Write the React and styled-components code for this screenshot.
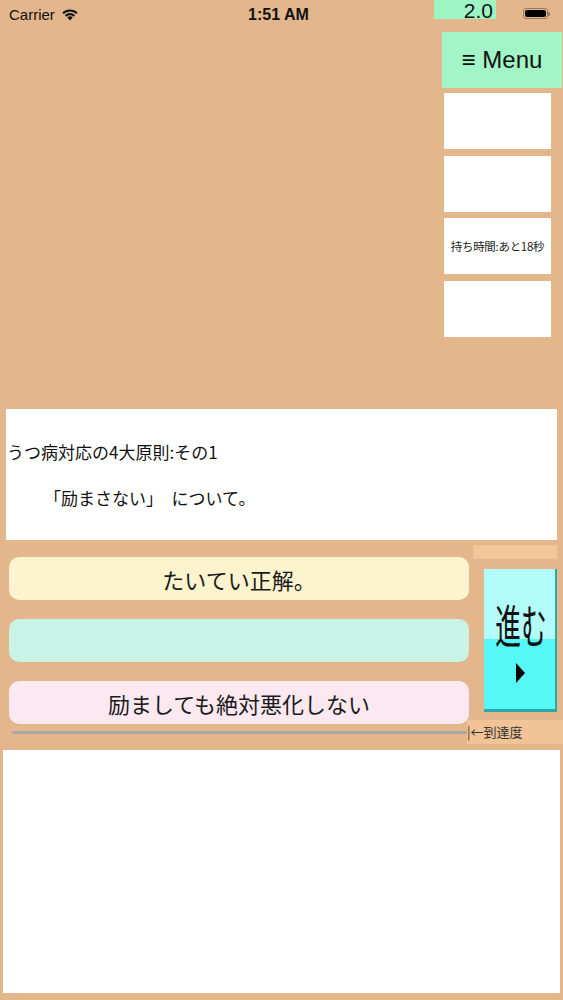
import React from "react";
import styled, { createGlobalStyle } from "styled-components";

const GlobalStyle = createGlobalStyle`
  html, body {
    margin: 0;
    padding: 0;
    background: #e3b68b;
  }
  body {
    font-family: "Liberation Sans", "Noto Sans CJK JP", sans-serif;
    color: #111;
  }
`;

const JP = `"Noto Sans CJK JP", "Liberation Sans", sans-serif`;

const App = () => {
  return (
    <>
      <GlobalStyle />
      <Page>
        <StatusBar>
          <Carrier>
            Carrier
            <svg width="18" height="13" viewBox="0 0 18 13">
              <path d="M9 12.5 L6.3 9.6 A3.9 3.9 0 0 1 11.7 9.6 Z" fill="#111" />
              <path d="M3.9 7.2 A7.2 7.2 0 0 1 14.1 7.2 L12.6 8.7 A5.1 5.1 0 0 0 5.4 8.7 Z" fill="#111" />
              <path d="M1.3 4.6 A10.9 10.9 0 0 1 16.7 4.6 L15.2 6.1 A8.8 8.8 0 0 0 2.8 6.1 Z" fill="#111" />
            </svg>
          </Carrier>
          <Clock>1:51 AM</Clock>
          <StatusRight>
            <Version>2.0</Version>
            <Battery>
              <span />
            </Battery>
          </StatusRight>
        </StatusBar>

        <TopArea>
          <SideColumn>
            <MenuButton>≡ Menu</MenuButton>
            <InfoBox />
            <InfoBox />
            <InfoBox>持ち時間:あと18秒</InfoBox>
            <InfoBox />
          </SideColumn>
        </TopArea>

        <QuestionPanel>
          <QuestionTitle>うつ病対応の4大原則:その1</QuestionTitle>
          <QuestionBody>「励まさない」　について。</QuestionBody>
        </QuestionPanel>

        <MidArea>
          <AnswerColumn>
            <Answer $bg="#fbf4cf">たいてい正解。</Answer>
            <Answer $bg="#c9f3e7"></Answer>
            <Answer $bg="#fce8f0">励ましても絶対悪化しない</Answer>
          </AnswerColumn>
          <NextColumn>
            <TopStrip />
            <NextButton>
              <NextLabel>進む</NextLabel>
              <Arrow />
            </NextButton>
          </NextColumn>
        </MidArea>

        <ProgressRow>
          <Track />
          <ProgressLabel>|←到達度</ProgressLabel>
        </ProgressRow>

        <BottomPanel />
      </Page>
    </>
  );
};

export default App;

const Page = styled.div`
  width: 563px;
  height: 1000px;
  display: flex;
  flex-direction: column;
  overflow: hidden;
`;

const StatusBar = styled.div`
  height: 28px;
  flex-shrink: 0;
  display: grid;
  grid-template-columns: 1fr auto 1fr;
  align-items: start;
`;

const Carrier = styled.div`
  display: flex;
  align-items: center;
  gap: 6px;
  padding: 6px 0 0 9px;
  font-size: 15px;
  svg {
    margin-top: -1px;
  }
`;

const Clock = styled.div`
  padding: 6px 6px 0 0;
  font-size: 16px;
  font-weight: 700;
`;

const StatusRight = styled.div`
  display: flex;
  justify-content: flex-end;
  align-items: flex-start;
`;

const Version = styled.div`
  width: 62px;
  height: 19px;
  background: #9ef5c4;
  font-size: 21px;
  line-height: 21px;
  text-align: right;
  padding-right: 3px;
  box-sizing: border-box;
  margin-right: 27px;
`;

const Battery = styled.div`
  position: relative;
  width: 25px;
  height: 11px;
  margin: 8px 15px 0 0;
  border: 1px solid #9a7a5c;
  border-radius: 3px;
  box-sizing: border-box;
  padding: 1px;
  span {
    display: block;
    width: 100%;
    height: 100%;
    background: #000;
    border-radius: 2px;
  }
  &::after {
    content: "";
    position: absolute;
    right: -3px;
    top: 3px;
    width: 2px;
    height: 4px;
    background: #9a7a5c;
    border-radius: 0 1px 1px 0;
  }
`;

const TopArea = styled.div`
  height: 381px;
  flex-shrink: 0;
  display: flex;
  justify-content: flex-end;
`;

const SideColumn = styled.div`
  width: 121px;
  padding-top: 4px;
  display: flex;
  flex-direction: column;
  gap: 6.5px;
`;

const MenuButton = styled.div`
  width: 120px;
  height: 56px;
  background: #a2f5c6;
  display: flex;
  align-items: center;
  justify-content: center;
  font-size: 24px;
  margin-bottom: -1.5px;
`;

const InfoBox = styled.div`
  width: 107px;
  height: 56px;
  margin-left: 2px;
  background: #fff;
  display: flex;
  align-items: center;
  justify-content: center;
  font-family: ${JP};
  font-size: 11.5px;
  letter-spacing: -0.3px;
  color: #222;
  white-space: nowrap;
`;

const QuestionPanel = styled.div`
  margin-left: 6px;
  width: 551px;
  height: 131px;
  flex-shrink: 0;
  background: #fff;
  box-sizing: border-box;
  padding: 30px 0 0 1px;
  font-family: ${JP};
`;

const QuestionTitle = styled.div`
  font-size: 17px;
  line-height: 26px;
`;

const QuestionBody = styled.div`
  font-size: 17px;
  line-height: 26px;
  margin-top: 20px;
  padding-left: 37px;
`;

const MidArea = styled.div`
  height: 180px;
  flex-shrink: 0;
  display: flex;
`;

const AnswerColumn = styled.div`
  width: 460px;
  margin-left: 9px;
  padding-top: 17px;
  display: flex;
  flex-direction: column;
  gap: 19px;
`;

const Answer = styled.div`
  height: 43px;
  flex-shrink: 0;
  border-radius: 10px;
  background: ${(p) => p.$bg};
  display: flex;
  align-items: center;
  justify-content: center;
  font-family: ${JP};
  font-size: 22px;
  color: #1a1a1a;
`;

const NextColumn = styled.div`
  flex: 1;
  display: flex;
  flex-direction: column;
`;

const TopStrip = styled.div`
  height: 14px;
  width: 84px;
  margin: 5px 0 0 4px;
  background: #f3c598;
`;

const NextButton = styled.div`
  width: 73px;
  height: 143px;
  margin: 10px 0 0 15px;
  background: linear-gradient(#b2fcfa 0 49%, #55f8f5 49% 100%);
  box-shadow: inset -2px -3px 0 #2aa8a6;
  display: flex;
  flex-direction: column;
  align-items: center;
  padding-top: 26px;
  box-sizing: border-box;
`;

const NextLabel = styled.div`
  font-family: ${JP};
  font-size: 46px;
  line-height: 56px;
  transform: scaleX(0.56);
  white-space: nowrap;
`;

const Arrow = styled.div`
  margin-top: 12px;
  width: 0;
  height: 0;
  border-top: 10px solid transparent;
  border-bottom: 10px solid transparent;
  border-left: 9px solid #000;
`;

const ProgressRow = styled.div`
  height: 24px;
  flex-shrink: 0;
  display: flex;
  align-items: center;
`;

const Track = styled.div`
  width: 455px;
  margin-left: 12px;
  height: 3px;
  background: #a8a8a8;
  border-radius: 2px;
`;

const ProgressLabel = styled.div`
  flex: 1;
  height: 24px;
  background: #f1c396;
  font-family: ${JP};
  font-size: 13px;
  line-height: 24px;
  color: #333;
`;

const BottomPanel = styled.div`
  margin: 6px 0 0 3px;
  width: 557px;
  height: 243px;
  flex-shrink: 0;
  background: #fff;
`;
